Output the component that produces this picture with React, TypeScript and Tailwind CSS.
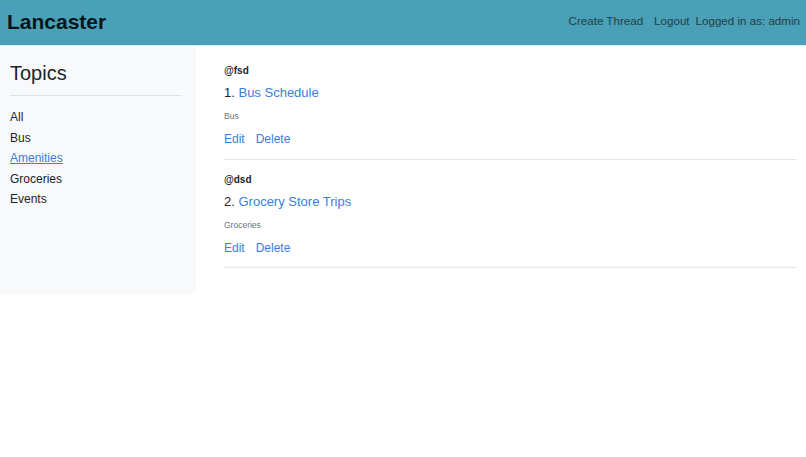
const topics = ["All", "Bus", "Amenities", "Groceries", "Events"];

const threads = [
  { user: "@fsd", title: "Bus Schedule", topic: "Bus" },
  { user: "@dsd", title: "Grocery Store Trips", topic: "Groceries" },
];

export default function App() {
  return (
    <div className="min-h-screen bg-white text-[#212529] font-['Liberation_Sans',Arial,sans-serif]">
      {/* Navbar */}
      <nav className="h-[46px] bg-[#4aa0b6] border-b border-[#d6eaf0] flex items-center justify-between pl-[7px] pr-[6px]">
        <span className="text-[21px] font-bold text-[#08161b] leading-none -mt-[3px]">Lancaster</span>
        <div className="flex items-center text-[11.6px] text-[#1f3f49] -mt-[3px]">
          <a className="mr-[11px]">Create Thread</a>
          <a className="mr-[6px]">Logout</a>
          <span>Logged in as: admin</span>
        </div>
      </nav>

      <div className="flex">
        {/* Sidebar */}
        <aside className="w-[196px] h-[247px] mt-px bg-[#f8f9fa] rounded-br-[3px] px-[10px] pt-[14px]">
          <h2 className="text-[20px] leading-[24px] mb-[10px]">Topics</h2>
          <div className="border-t border-[#dee2e6] w-[171px]" />
          <ul className="mt-[11px]">
            {topics.map((t) => (
              <li key={t} className="h-[20.5px] leading-[20.5px] text-[12px]">
                {t === "Amenities" ? (
                  <a className="text-[#3b7ddd] underline">{t}</a>
                ) : (
                  t
                )}
              </li>
            ))}
          </ul>
        </aside>

        {/* Thread list */}
        <main className="flex-1 pl-[28px] pr-[9px] pt-[5px]">
          {threads.map((th, i) => (
            <div key={th.title} className="pt-[13px] pb-[11.5px] border-b border-[#e6e6e6]">
              <div className="text-[10px] leading-[14px] font-bold">{th.user}</div>
              <div className="text-[13px] leading-[18px] mt-[6px]">
                {i + 1}. <a className="text-[#3b7ddd]">{th.title}</a>
              </div>
              <div className="text-[8.5px] leading-[12px] text-[#6c757d] mt-[8px]">{th.topic}</div>
              <div className="text-[12px] leading-[16px] mt-[9px] text-[#3b7ddd]">
                <a className="mr-[11px]">Edit</a>
                <a>Delete</a>
              </div>
            </div>
          ))}
        </main>
      </div>
    </div>
  );
}
